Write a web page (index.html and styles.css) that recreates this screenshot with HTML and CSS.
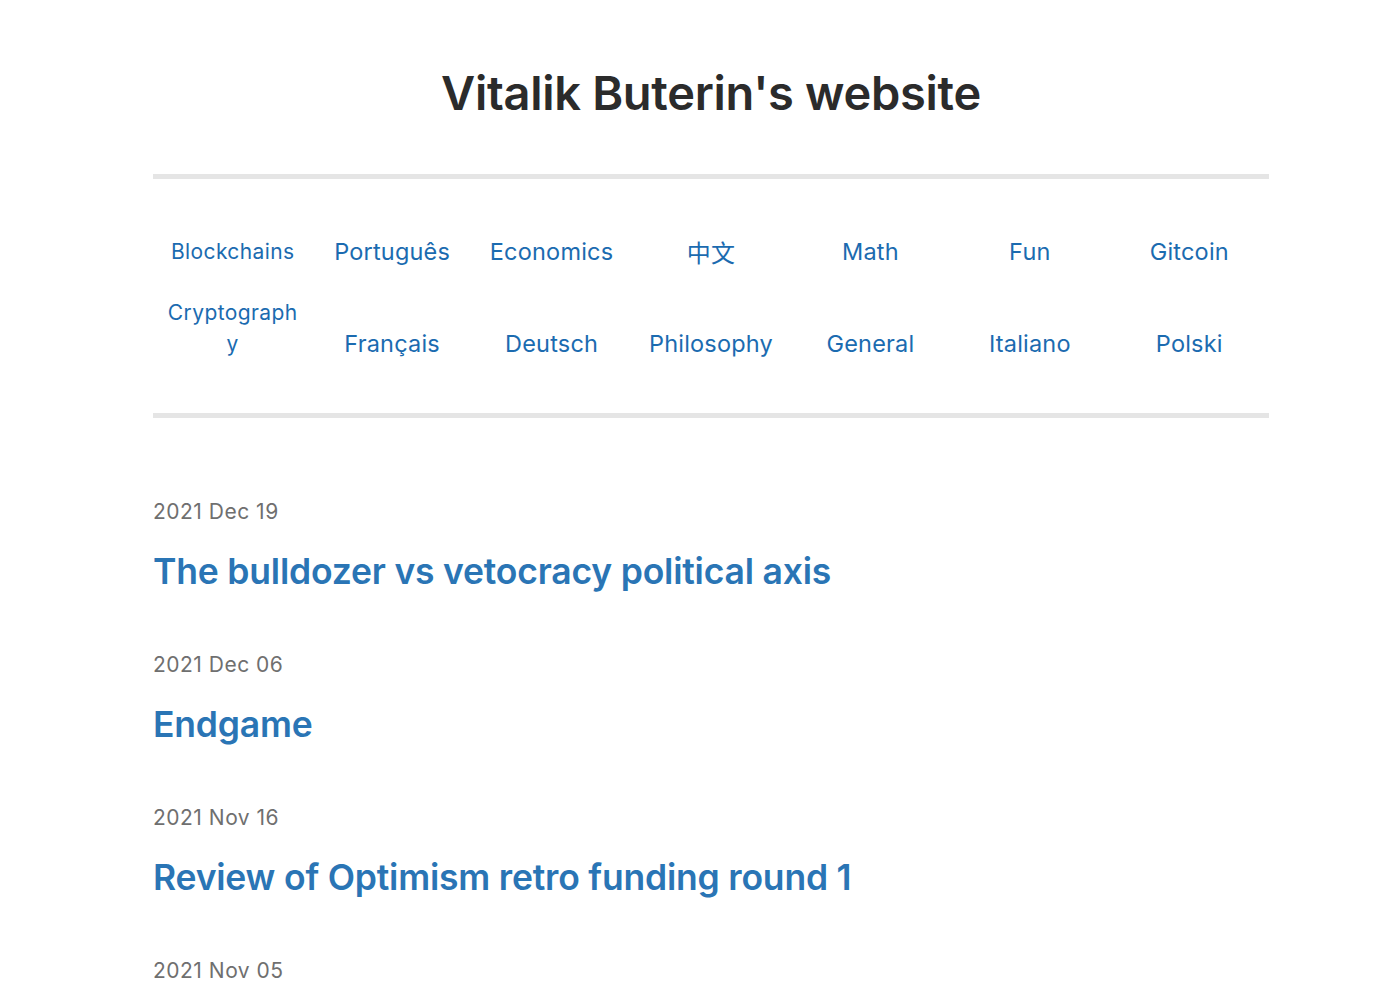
FILE: index.html
```html
<!doctype html>
<html lang="en">
  <head>
    <meta charset="utf-8">
    <title>Vitalik Buterin's website</title>
    <link rel="stylesheet" href="styles.css">
  </head>
  <body>
    <div class="page">
      <div class="main">
        <h1 class="site-title">Vitalik Buterin's website</h1>

        <hr class="rule">

        <nav class="categories">
          <a class="cat small" href="#">Blockchains</a>
          <a class="cat" href="#">Português</a>
          <a class="cat" href="#">Economics</a>
          <a class="cat cjk" href="#">中文</a>
          <a class="cat" href="#">Math</a>
          <a class="cat" href="#">Fun</a>
          <a class="cat" href="#">Gitcoin</a>
          <a class="cat small wrap" href="#">Cryptography</a>
          <a class="cat" href="#">Français</a>
          <a class="cat" href="#">Deutsch</a>
          <a class="cat" href="#">Philosophy</a>
          <a class="cat" href="#">General</a>
          <a class="cat" href="#">Italiano</a>
          <a class="cat" href="#">Polski</a>
        </nav>

        <hr class="rule">

        <ul class="posts">
          <li class="post">
            <span class="post-date">2021 Dec 19</span>
            <a class="post-title" href="#">The bulldozer vs vetocracy political axis</a>
          </li>
          <li class="post">
            <span class="post-date">2021 Dec 06</span>
            <a class="post-title" href="#">Endgame</a>
          </li>
          <li class="post">
            <span class="post-date">2021 Nov 16</span>
            <a class="post-title" href="#">Review of Optimism retro funding round 1</a>
          </li>
          <li class="post">
            <span class="post-date">2021 Nov 05</span>
          </li>
        </ul>
      </div>
    </div>
  </body>
</html>
```

FILE: styles.css
```css
body {
  margin: 0;
  font-family: Inter, "Noto Sans CJK SC", sans-serif;
  color: #2b2b2b;
  background: #fff;
}

.page {
  padding-left: 22px;
}

.main {
  width: 1116px;
  margin: 0 auto;
}

.site-title {
  margin: 0;
  padding-top: 62px;
  height: 112px;
  font-size: 47px;
  font-weight: 600;
  line-height: 62px;
  text-align: center;
  letter-spacing: -0.3px;
}

.rule {
  margin: 0;
  height: 5px;
  border: 0;
  background: #e5e5e5;
}

/* category table */
.categories {
  display: grid;
  grid-template-columns: repeat(7, 1fr);
  row-gap: 30px;
  align-items: end;
  padding: 57px 0 54px;
}

.cat {
  padding: 0 6px;
  font-size: 23.5px;
  line-height: 30px;
  color: #1b6bb0;
  text-align: center;
  text-decoration: none;
  letter-spacing: 0.2px;
}

.cat.small {
  font-size: 21px;
  line-height: 31px;
  letter-spacing: 0.4px;
}

.cat.wrap {
  word-break: break-all;
  padding: 0 12px;
}

.cat.cjk {
  font-family: "Noto Sans CJK SC", sans-serif;
  font-size: 24px;
}

/* post list */
.posts {
  list-style: none;
  margin: 0;
  padding: 79px 0 0;
}

.post {
  display: flex;
  flex-direction: column;
  height: 153px;
}

.post-date {
  font-size: 21px;
  line-height: 30px;
  color: #6f6f6f;
  letter-spacing: 0.5px;
}

.post-title {
  margin-top: 24px;
  font-size: 35.5px;
  font-weight: 600;
  line-height: 42px;
  color: #2a75b5;
  text-decoration: none;
  letter-spacing: -0.2px;
}
```
